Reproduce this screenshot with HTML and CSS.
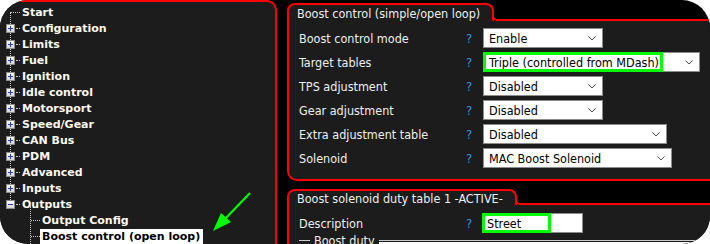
FILE: index.html
```html
<!DOCTYPE html>
<html lang="en">
<head>
    <meta charset="UTF-8">
    <title>Boost control</title>
    <link rel="stylesheet" href="styles.css">
</head>
<body>
    <div class="screen">
        <nav class="tree">
            <ul class="branch">
                <li class="node"><span class="twig"><span class="dash"></span></span>Start</li>
                <li class="node"><span class="twig"><span class="box plus"></span><span class="dash"></span></span>Configuration</li>
                <li class="node"><span class="twig"><span class="box plus"></span><span class="dash"></span></span>Limits</li>
                <li class="node"><span class="twig"><span class="box plus"></span><span class="dash"></span></span>Fuel</li>
                <li class="node"><span class="twig"><span class="box plus"></span><span class="dash"></span></span>Ignition</li>
                <li class="node"><span class="twig"><span class="box plus"></span><span class="dash"></span></span>Idle control</li>
                <li class="node"><span class="twig"><span class="box plus"></span><span class="dash"></span></span>Motorsport</li>
                <li class="node"><span class="twig"><span class="box plus"></span><span class="dash"></span></span>Speed/Gear</li>
                <li class="node"><span class="twig"><span class="box plus"></span><span class="dash"></span></span>CAN Bus</li>
                <li class="node"><span class="twig"><span class="box plus"></span><span class="dash"></span></span>PDM</li>
                <li class="node"><span class="twig"><span class="box plus"></span><span class="dash"></span></span>Advanced</li>
                <li class="node"><span class="twig"><span class="box plus"></span><span class="dash"></span></span>Inputs</li>
                <li class="node"><span class="twig"><span class="box"></span><span class="dash"></span></span>Outputs</li>
            </ul>
            <ul class="branch sub">
                <li class="node"><span class="twig"><span class="dash"></span></span>Output Config</li>
                <li class="node"><span class="twig"><span class="dash"></span></span><span class="selected">Boost control (open loop)</span></li>
            </ul>
        </nav>

        <main class="main">
            <section class="group">
                <div class="tab-row">
                    <div class="tab">Boost control (simple/open loop)</div>
                    <div class="tab-line"></div>
                </div>
                <div class="group-body">
                    <div class="row">
                        <span class="label">Boost control mode</span><span class="help">?</span>
                        <div class="select w-120"><span>Enable</span><svg class="chev" viewBox="0 0 8 5"><path d="M0.5 0.5 L4 4 L7.5 0.5"/></svg></div>
                    </div>
                    <div class="row">
                        <span class="label">Target tables</span><span class="help">?</span>
                        <div class="select w-217"><span>Triple (controlled from MDash)</span><svg class="chev" viewBox="0 0 8 5"><path d="M0.5 0.5 L4 4 L7.5 0.5"/></svg><span class="mark mark-target"></span></div>
                    </div>
                    <div class="row">
                        <span class="label">TPS adjustment</span><span class="help">?</span>
                        <div class="select w-120"><span>Disabled</span><svg class="chev" viewBox="0 0 8 5"><path d="M0.5 0.5 L4 4 L7.5 0.5"/></svg></div>
                    </div>
                    <div class="row">
                        <span class="label">Gear adjustment</span><span class="help">?</span>
                        <div class="select w-120"><span>Disabled</span><svg class="chev" viewBox="0 0 8 5"><path d="M0.5 0.5 L4 4 L7.5 0.5"/></svg></div>
                    </div>
                    <div class="row">
                        <span class="label">Extra adjustment table</span><span class="help">?</span>
                        <div class="select w-184"><span>Disabled</span><svg class="chev" viewBox="0 0 8 5"><path d="M0.5 0.5 L4 4 L7.5 0.5"/></svg></div>
                    </div>
                    <div class="row">
                        <span class="label">Solenoid</span><span class="help">?</span>
                        <div class="select w-189"><span>MAC Boost Solenoid</span><svg class="chev" viewBox="0 0 8 5"><path d="M0.5 0.5 L4 4 L7.5 0.5"/></svg></div>
                    </div>
                </div>
            </section>

            <section class="group second">
                <div class="tab-row">
                    <div class="tab">Boost solenoid duty table 1 -ACTIVE-</div>
                    <div class="tab-line"></div>
                </div>
                <div class="group-body">
                    <div class="row">
                        <span class="label">Description</span><span class="help">?</span>
                        <div class="text-input"><span>Street</span><span class="mark mark-desc"></span></div>
                    </div>
                    <div class="legend">
                        <span class="legend-line"></span>
                        <span class="legend-text">Boost duty</span>
                        <div class="legend-fill"><div class="duty-table"></div></div>
                    </div>
                </div>
            </section>
        </main>

        <!-- annotation arrow -->
        <svg class="arrow" width="60" height="60" viewBox="0 0 60 60">
            <line x1="48" y1="2" x2="22" y2="29" stroke="#00ff00" stroke-width="2.2"/>
            <polygon points="11,40 19,22 29,31" fill="#00ff00"/>
        </svg>
    </div>
</body>
</html>
```

FILE: styles.css
```css
* {
    margin: 0;
    padding: 0;
    box-sizing: border-box;
}
body {
    background: #ffffff;
    width: 710px;
    height: 244px;
    overflow: hidden;
}
.screen {
    position: relative;
    display: flex;
    width: 710px;
    height: 244px;
    background: #000;
    border-radius: 28px;
    overflow: hidden;
    font-family: "DejaVu Sans", Verdana, sans-serif;
}

/* left tree */
.tree {
    width: 277px;
    flex: none;
    background: #1c1c1c;
    border-top: 2px solid #ff0000;
    border-right: 2px solid #ff0000;
    border-top-right-radius: 10px;
    padding-top: 2px;
    color: #fbf8ee;
    font-weight: bold;
    font-size: 11px;
}
.branch {
    position: relative;
    list-style: none;
}
.branch::before {
    content: "";
    position: absolute;
    left: 10px;
    top: 8px;
    bottom: 8px;
    border-left: 1px dotted #c8c8c8;
}
.branch.sub {
    margin-left: 20px;
}
.branch.sub::before {
    top: -6px;
    bottom: -20px;
}
.node {
    display: flex;
    align-items: center;
    height: 16px;
    white-space: nowrap;
}
.twig {
    position: relative;
    display: flex;
    align-items: center;
    width: 22px;
    height: 16px;
    flex: none;
    padding-left: 11px;
}
.dash {
    width: 9px;
    border-top: 1px dotted #c8c8c8;
}
.box {
    position: relative;
    width: 9px;
    height: 9px;
    margin-left: -5px;
    margin-right: 1px;
    border: 1px solid #8a8a8a;
    background: linear-gradient(#ffffff, #d4d4d4);
    z-index: 1;
}
.box::before,
.plus::after {
    content: "";
    position: absolute;
    background: #2b3a9c;
}
.box::before {
    left: 1px;
    top: 3px;
    width: 5px;
    height: 1px;
}
.plus::after {
    left: 3px;
    top: 1px;
    width: 1px;
    height: 5px;
}
.box + .dash {
    width: 4px;
}
.selected {
    background: #ffffff;
    color: #000;
    padding: 1px 3px 1px 2px;
    margin-left: -2px;
}

/* right panels */
.main {
    width: 440px;
    flex: none;
    margin-left: 10px;
    padding-top: 3px;
    color: #eeeeee;
    font-family: "DejaVu Sans Condensed", "DejaVu Sans", sans-serif;
    font-size: 12.5px;
}
.group.second {
    margin-top: 8px;
}
.tab-row {
    display: flex;
}
.tab {
    border: 2px solid #ff0000;
    border-bottom: none;
    border-radius: 8px 8px 0 0;
    background: #1c1c1c;
    padding: 1px 12px 0 8px;
    height: 18px;
    line-height: 15px;
    white-space: nowrap;
}
.second .tab {
    height: 16px;
    line-height: 14px;
}
.tab-line {
    flex: 1;
    align-self: flex-end;
    height: 8px;
    margin-left: -2px;
    border-left: 2px solid #ff0000;
    border-bottom: 2px solid #ff0000;
    border-bottom-left-radius: 5px;
}
.group-body {
    background: #1c1c1c;
    border-left: 2px solid #ff0000;
    border-bottom: 2px solid #ff0000;
    border-bottom-left-radius: 10px;
    padding: 7px 0 11px 10px;
    display: flex;
    flex-direction: column;
    gap: 4px;
}
.second .group-body {
    padding-top: 8px;
    border-bottom: none;
    height: 60px;
}
.row {
    display: grid;
    grid-template-columns: 167px 17px auto;
    align-items: center;
    height: 20px;
}
.help {
    color: #2b95de;
    font-size: 13px;
}
.select,
.text-input {
    position: relative;
    display: flex;
    align-items: center;
    justify-content: space-between;
    height: 20px;
    background: #ffffff;
    border: 1px solid #8c8c8c;
    color: #000;
    font-size: 12.5px;
    padding: 0 6px 0 5px;
    white-space: nowrap;
}
.w-120 { width: 120px; }
.w-184 { width: 184px; }
.w-189 { width: 189px; }
.w-217 { width: 217px; }
.chev {
    width: 8px;
    height: 5px;
    fill: none;
    stroke: #555;
    stroke-width: 1;
}
.text-input {
    width: 101px;
    margin-left: -1px;
    padding-left: 4px;
}
.mark {
    position: absolute;
    left: -1px;
    top: -1px;
    height: 20px;
    border: 3px solid #00ff00;
}
.mark-target { width: 180px; }
.mark-desc { width: 69px; }
.legend {
    display: flex;
    align-items: center;
    gap: 3px;
    height: 12px;
    margin-top: -3px;
}
.legend-line {
    width: 11px;
    border-top: 1px solid #ccc;
}
.legend-text {
    padding: 0 1px;
}
.legend-fill {
    flex: 1;
    align-self: stretch;
    margin-top: 6px;
    border-top: 1px solid #ccc;
}
.duty-table {
    margin-top: 1px;
    height: 10px;
    background: #ffffff;
}

.arrow {
    position: absolute;
    left: 202px;
    top: 191px;
}
```
